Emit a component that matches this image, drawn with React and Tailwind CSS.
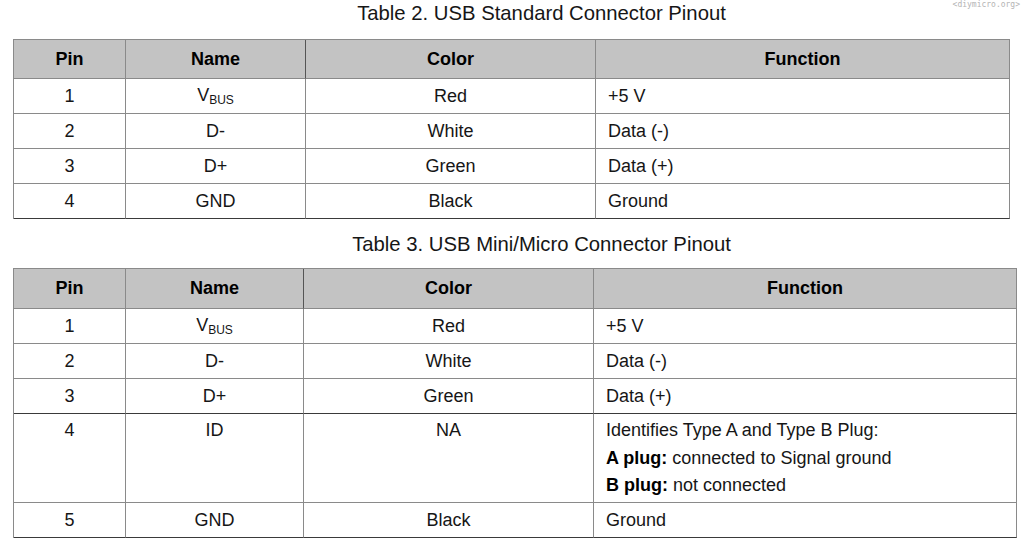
import React from "react";

const G = "border-[#8a8a8a]";

function Vbus() {
  return (
    <span>
      V<span className="text-[12px] relative top-[3px]">BUS</span>
    </span>
  );
}

function Row({ cols, cells, h = "h-[35px]", dark = false, top = false }) {
  const bc = dark ? "border-[#3a3a3a]" : G;
  return (
    <div className={`grid ${cols} ${h}`}>
      {cells.map((c, i) => {
        const last = i === cells.length - 1;
        const vr = i === 1 ? "border-r-[#2e2e2e]" : "";
        return (
          <div
            key={i}
            className={`border-b ${bc} ${last ? "border-r border-r-[#8a8a8a]" : `border-r border-r-[#8a8a8a] ${vr}`} flex ${
              top ? "items-start pt-[3px]" : "items-center"
            } ${last ? "justify-start pl-[12px]" : "justify-center"}`}
          >
            {c}
          </div>
        );
      })}
    </div>
  );
}

function Header({ cols, h }) {
  return (
    <div className={`grid ${cols} ${h} bg-[#c3c3c3] font-bold text-black`}>
      {["Pin", "Name", "Color", "Function"].map((t, i) => (
        <div
          key={t}
          className={`border-b ${G} border-r border-r-[#8a8a8a] ${i === 1 ? "border-r-[#555]" : ""} flex items-center justify-center`}
        >
          {t}
        </div>
      ))}
    </div>
  );
}

export default function App() {
  const cols1 = "grid-cols-[112px_180px_290px_1fr]";
  const cols2 = "grid-cols-[112px_178px_290px_1fr]";
  return (
    <div
      className="relative w-[1024px] h-[549px] bg-white text-[#161616] overflow-hidden"
      style={{ fontFamily: '"Liberation Sans", Arial, sans-serif' }}
    >
      <div
        className="absolute right-[4px] top-[0px] text-[8px] leading-[10px] text-[#b4b4b4]"
        style={{ fontFamily: '"DejaVu Sans Mono", "Liberation Mono", monospace' }}
      >
        &lt;diymicro.org&gt;
      </div>

      <div className="mt-[1px] h-[24px] leading-[24px] text-[20.3px] text-center pl-[59px]">
        Table 2. USB Standard Connector Pinout
      </div>

      <div className={`mt-[14px] ml-[13px] w-[997px] border-t border-l ${G} text-[18px] leading-[27px]`}>
        <Header cols={cols1} h="h-[39px]" />
        <Row cols={cols1} cells={["1", <Vbus />, "Red", "+5 V"]} />
        <Row cols={cols1} cells={["2", "D-", "White", "Data (-)"]} />
        <Row cols={cols1} cells={["3", "D+", "Green", "Data (+)"]} />
        <Row cols={cols1} dark cells={["4", "GND", "Black", "Ground"]} />
      </div>

      <div className="mt-[13px] h-[24px] leading-[24px] text-[20.3px] text-center pl-[59px]">
        Table 3. USB Mini/Micro Connector Pinout
      </div>

      <div className={`mt-[12px] ml-[13px] w-[1004px] border-t border-l ${G} text-[18px] leading-[27px]`}>
        <Header cols={cols2} h="h-[40px]" />
        <Row cols={cols2} cells={["1", <Vbus />, "Red", "+5 V"]} />
        <Row cols={cols2} cells={["2", "D-", "White", "Data (-)"]} />
        <Row cols={cols2} dark cells={["3", "D+", "Green", "Data (+)"]} />
        <Row
          cols={cols2}
          h="h-[89px]"
          top
          cells={[
            "4",
            "ID",
            "NA",
            <div className="leading-[27.5px]">
              <div>Identifies Type A and Type B Plug:</div>
              <div>
                <b className="text-black">A plug:</b> connected to Signal ground
              </div>
              <div>
                <b className="text-black">B plug:</b> not connected
              </div>
            </div>,
          ]}
        />
        <Row cols={cols2} dark cells={["5", "GND", "Black", "Ground"]} />
      </div>
    </div>
  );
}
